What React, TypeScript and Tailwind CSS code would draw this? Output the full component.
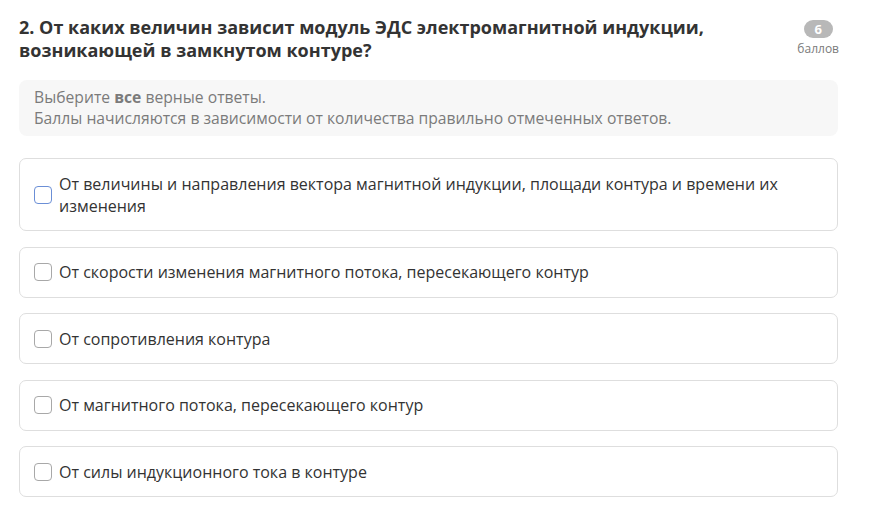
import React from "react";

const options = [
  "От величины и направления вектора магнитной индукции, площади контура и времени их изменения",
  "От скорости изменения магнитного потока, пересекающего контур",
  "От сопротивления контура",
  "От магнитного потока, пересекающего контур",
  "От силы индукционного тока в контуре",
];

export default function App() {
  return (
    <div className="w-[885px] h-[518px] bg-white overflow-hidden text-[#333333]" style={{ fontFamily: '"Open Sans", "Noto Sans", sans-serif' }}>
      <div className="pl-[19px] pr-[47px] pt-[16px]">
        <div className="flex justify-between items-start">
          <h2 className="text-[18px] leading-[23px] font-bold text-[#333333] w-[740px]">
            2. От каких величин зависит модуль ЭДС электромагнитной индукции, возникающей в замкнутом контуре?
          </h2>
          <div className="flex flex-col items-center pt-[4px] mr-[-1px]">
            <div className="w-[29px] h-[18px] rounded-full bg-[#b8b8b8] text-white text-[13px] leading-[18px] font-bold flex items-center justify-center">6</div>
            <div className="text-[12px] leading-[16px] text-[#7a7a7a] mt-[3px]">баллов</div>
          </div>
        </div>
        <div className="mt-[18px] bg-[#f7f7f7] rounded-[8px] px-[15px] py-[7px] text-[15.7px] leading-[21px] text-[#7b7b7b]">
          <div>Выберите <span className="font-bold">все</span> верные ответы.</div>
          <div>Баллы начисляются в зависимости от количества правильно отмеченных ответов.</div>
        </div>
        <div className="mt-[22px] flex flex-col gap-[15.5px]">
          {options.map((o, i) => (
            <label key={i} className="flex items-center gap-[7px] border border-[#dedede] rounded-[7px] px-[14px] py-[13.5px]">
              <span className={`shrink-0 w-[18px] h-[18px] rounded-[4px] border-[1.5px] bg-white ${i === 0 ? "border-[#6b8fd6]" : "border-[#a8a8a8]"}`} />
              <span className="text-[16px] leading-[22px] text-[#333333]">{o}</span>
            </label>
          ))}
        </div>
      </div>
    </div>
  );
}
